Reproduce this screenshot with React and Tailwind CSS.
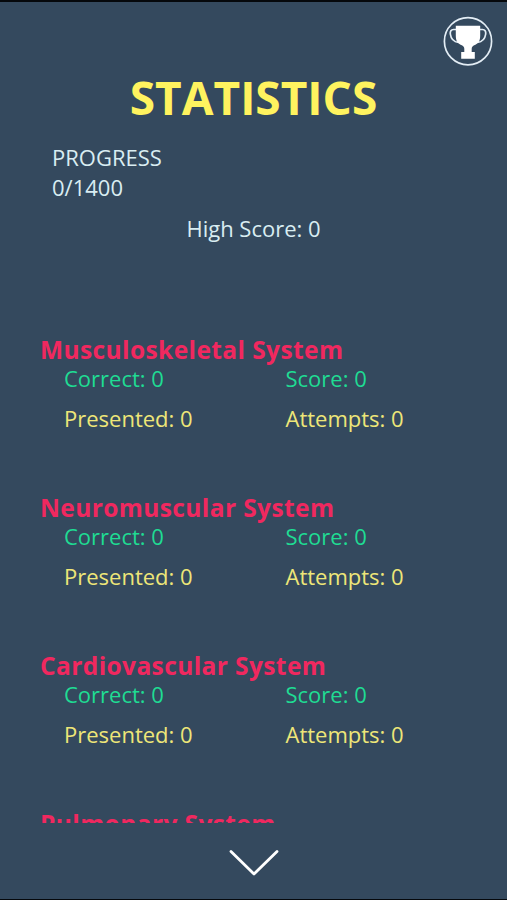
import React from 'react';

const systems = [
    'Musculoskeletal System',
    'Neuromuscular System',
    'Cardiovascular System',
    'Pulmonary System',
];

const TrophyButton = () => (
    <button className="w-[50px] h-[50px] shrink-0" aria-label="Achievements">
        <svg viewBox="0 0 50 50" className="w-full h-full" fill="none">
            <circle cx="25" cy="25.2" r="23.6" stroke="#e3edf5" strokeWidth="1.7" />
            <path d="M13 13.500H10.500c-2.500 0-3.500 2-3.200 4.500.7 5 4 8 8.200 8.500M37 13.500h2.500c2.500 0 3.500 2 3.200 4.500-.7 5-4 8-8.200 8.500" stroke="#e3edf5" strokeWidth="1.7" />
            <path d="M12.800 9.800h24.400v9.700c0 5-1.500 7.700-4.800 9.200-2.700 1.200-3.700 2-3.700 4V36h3.100v6.700h-13.600V36h3.100v-3.300c0-2-1-2.800-3.700-4-3.300-1.500-4.800-4.200-4.800-9.200z" fill="#fff" />
        </svg>
    </button>
);

const SystemStats = ({ name }) => (
    <section className="h-[158px] pl-10">
        <h2 className="text-[24.500px] leading-[26px] font-bold text-[#f0285f] whitespace-nowrap tracking-[0.4px]">{name}</h2>
        <div className="grid grid-cols-[221.500px_1fr] pl-6 text-[22px] leading-[30px] gap-y-[10px]">
            <p className="text-[#1fdc93]">Correct: 0</p>
            <p className="text-[#1fdc93]">Score: 0</p>
            <p className="text-[#eee678]">Presented: 0</p>
            <p className="text-[#eee678]">Attempts: 0</p>
        </div>
    </section>
);

const App = () => {
    return (
        <main className="h-[900px] w-full flex flex-col overflow-hidden bg-[#34495e] border-t-2 border-b border-[#05080c] font-['Open_Sans',sans-serif]">
            <header className="h-[65px] shrink-0 flex justify-end pt-[14px] pr-[14.500px]">
                <TrophyButton />
            </header>
            <h1 className="text-center text-[46px] leading-[60px] font-bold text-[#fff35f]">STATISTICS</h1>
            <div className="pt-[15px] pl-[52px] text-[22px] leading-[30px] text-[#d9edf2]">
                <p>PROGRESS</p>
                <p>0/1400</p>
            </div>
            <p className="mt-[11px] text-center text-[22px] leading-[30px] text-[#d9edf2]">High Score: 0</p>
            <div className="mt-[94px] h-[486px] shrink-0 overflow-hidden">
                {systems.map((name) => (
                    <SystemStats key={name} name={name} />
                ))}
            </div>
            <footer className="flex justify-center pt-[26px]">
                <svg viewBox="0 0 50 28" className="w-[50px] h-[28px]" fill="none" stroke="#fff" strokeWidth="2.8" strokeLinecap="round" strokeLinejoin="round">
                    <path d="M2 2.500 25 25 48 2.500" />
                </svg>
            </footer>
        </main>
    );
};

export default App;
